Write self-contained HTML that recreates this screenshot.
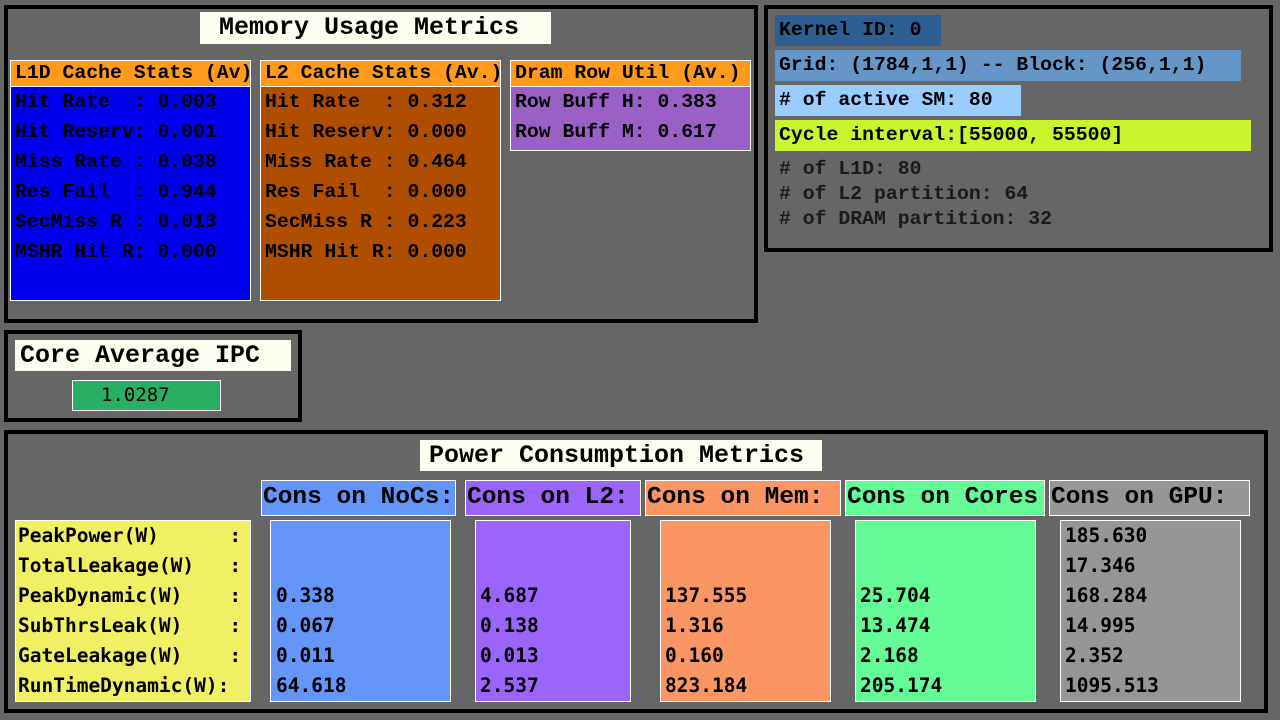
<!DOCTYPE html>
<html><head><meta charset="utf-8"><style>
*{margin:0;padding:0;box-sizing:border-box}
body{width:1280px;height:720px;background:#666;position:relative;overflow:hidden;font-family:"Liberation Mono",monospace;font-weight:bold;color:#000}
.pan{position:absolute;border:4px solid #000}
.t{position:absolute;background:#fdfdf0;font-size:25px;line-height:31px;white-space:pre}
.box{position:absolute;border:1px solid #fff}
.m{font-size:19.8px;white-space:pre;line-height:30px;padding-left:4px}
.h{font-size:19.8px;white-space:pre;line-height:25px;padding-left:4px}
.d{font-family:"DejaVu Sans Mono",monospace;font-size:19.5px;white-space:pre;line-height:30px;padding-left:4px}
.ph{position:absolute;border:1px solid #fff;font-size:24.5px;line-height:33px;white-space:pre;padding-left:1px;overflow:hidden}
.r{position:absolute;font-size:19.8px;white-space:pre;line-height:30px;padding-left:4px}
</style></head><body>

<div class="pan" style="left:4px;top:5px;width:754px;height:318px"></div>
<div class="t" style="left:200px;top:12px;width:351px;height:32px;padding-left:19px">Memory Usage Metrics</div>

<div class="box h" style="left:10px;top:60px;width:241px;height:27px;background:#ff9a1a;overflow:hidden">L1D Cache Stats (Av)</div>
<div class="box m" style="left:10px;top:86px;width:241px;height:215px;background:#0000ee">Hit Rate  : 0.003
Hit Reserv: 0.001
Miss Rate : 0.038
Res Fail  : 0.944
SecMiss R : 0.013
MSHR Hit R: 0.000</div>

<div class="box h" style="left:260px;top:60px;width:241px;height:27px;background:#ff9a1a;overflow:hidden">L2 Cache Stats (Av.)</div>
<div class="box m" style="left:260px;top:86px;width:241px;height:215px;background:#b04e00">Hit Rate  : 0.312
Hit Reserv: 0.000
Miss Rate : 0.464
Res Fail  : 0.000
SecMiss R : 0.223
MSHR Hit R: 0.000</div>

<div class="box h" style="left:510px;top:60px;width:241px;height:27px;background:#ff9a1a;overflow:hidden">Dram Row Util (Av.)</div>
<div class="box m" style="left:510px;top:86px;width:241px;height:65px;background:#9b60c8">Row Buff H: 0.383
Row Buff M: 0.617</div>

<div class="pan" style="left:764px;top:5px;width:509px;height:247px"></div>
<div class="r" style="left:775px;top:15px;width:166px;height:31px;background:#2e5f92">Kernel ID: 0</div>
<div class="r" style="left:775px;top:50px;width:466px;height:31px;background:#6496c8">Grid: (1784,1,1) -- Block: (256,1,1)</div>
<div class="r" style="left:775px;top:85px;width:246px;height:31px;background:#99ccff"># of active SM: 80</div>
<div class="r" style="left:775px;top:120px;width:476px;height:31px;background:#c8f52d">Cycle interval:[55000, 55500]</div>
<div class="r" style="left:775px;top:157px;line-height:25px;color:#1a1a1a"># of L1D: 80
# of L2 partition: 64
# of DRAM partition: 32</div>

<div class="pan" style="left:4px;top:330px;width:298px;height:92px"></div>
<div class="t" style="left:15px;top:340px;width:276px;height:31px;padding-left:5px">Core Average IPC</div>
<div class="box" style="left:72px;top:380px;width:149px;height:31px;background:#28af64;font-family:'DejaVu Sans Mono',monospace;font-weight:normal;font-size:19px;line-height:29px;padding-left:28px">1.0287</div>

<div class="pan" style="left:4px;top:430px;width:1264px;height:283px"></div>
<div class="t" style="left:420px;top:440px;width:402px;height:31px;padding-left:9px">Power Consumption Metrics</div>

<div class="ph" style="left:261px;top:480px;width:195px;height:36px;background:#6496fa">Cons on NoCs:</div>
<div class="ph" style="left:465px;top:480px;width:176px;height:36px;background:#9b64fa">Cons on L2:</div>
<div class="ph" style="left:645px;top:480px;width:196px;height:36px;background:#fa9664">Cons on Mem:</div>
<div class="ph" style="left:845px;top:480px;width:200px;height:36px;background:#64fa96">Cons on Cores</div>
<div class="ph" style="left:1049px;top:480px;width:201px;height:36px;background:#969696">Cons on GPU:</div>

<div class="box d" style="left:15px;top:520px;width:236px;height:182px;background:#f0f064;padding-left:2px">PeakPower(W)      :
TotalLeakage(W)   :
PeakDynamic(W)    :
SubThrsLeak(W)    :
GateLeakage(W)    :
RunTimeDynamic(W):</div>
<div class="box d" style="left:270px;top:520px;width:181px;height:182px;background:#6496fa;padding-left:5px">

0.338
0.067
0.011
64.618</div>
<div class="box d" style="left:475px;top:520px;width:156px;height:182px;background:#9b64fa">

4.687
0.138
0.013
2.537</div>
<div class="box d" style="left:660px;top:520px;width:171px;height:182px;background:#fa9664">

137.555
1.316
0.160
823.184</div>
<div class="box d" style="left:855px;top:520px;width:181px;height:182px;background:#64fa96">

25.704
13.474
2.168
205.174</div>
<div class="box d" style="left:1060px;top:520px;width:181px;height:182px;background:#969696">185.630
17.346
168.284
14.995
2.352
1095.513</div>
</body></html>
